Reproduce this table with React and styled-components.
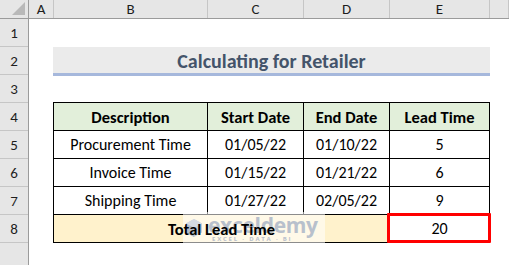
import React from "react";
import styled, { createGlobalStyle } from "styled-components";

const Global = createGlobalStyle`
  html, body { margin: 0; padding: 0; background: #fff; }
  body { font-family: Carlito, Lato, "Noto Sans", sans-serif; overflow: hidden; }
`;

const Page = styled.div`
  width: 509px;
  height: 265px;
  overflow: hidden;
  display: flex;
  flex-direction: column;
  background: #fff;
`;

const ColHeaderBar = styled.div`
  display: grid;
  grid-template-columns: 29px 25px 154px 96px 86px 100px 1fr;
  height: 23px;
  background: #e6e6e6;
  border-bottom: 1px solid #9b9b9b;
  box-sizing: border-box;
`;

const ColHead = styled.div`
  display: flex;
  align-items: center;
  justify-content: center;
  border-right: 1px solid ${(p) => (p.$corner ? "#9b9b9b" : "#c6c6c6")};
  font-size: 15px;
  color: #1e1e1e;
  position: relative;
`;

const CornerTriangle = styled.div`
  position: absolute;
  right: 3px;
  bottom: 3px;
  width: 0;
  height: 0;
  border-left: 13px solid transparent;
  border-bottom: 13px solid #b9b9b9;
`;

const Body = styled.div`
  display: flex;
  flex: 1;
`;

const RowHeaders = styled.div`
  width: 29px;
  display: flex;
  flex-direction: column;
  background: #e6e6e6;
  border-right: 1px solid #9b9b9b;
  box-sizing: border-box;
  flex-shrink: 0;
`;

const RowHead = styled.div`
  height: 28px;
  flex-shrink: 0;
  box-sizing: border-box;
  border-bottom: 1px solid #c6c6c6;
  display: flex;
  align-items: center;
  justify-content: center;
  font-size: 15px;
  color: #1e1e1e;
`;

const Canvas = styled.div`
  display: flex;
  flex-direction: column;
  padding-left: 24px;
`;

const Spacer = styled.div`
  height: ${(p) => p.$h}px;
`;

const Title = styled.div`
  width: 437px;
  height: 29px;
  box-sizing: border-box;
  background: #ebebeb;
  border-bottom: 3px solid #a6b8dc;
  display: flex;
  align-items: center;
  justify-content: center;
  font-weight: 700;
  font-size: 20px;
  color: #44546a;
  padding-top: 1px;
`;

const Table = styled.div`
  display: grid;
  grid-template-columns: 154px 96px 86px 100px;
  grid-auto-rows: 28px;
  border-left: 1px solid #000;
  border-top: 1px solid #000;
  width: 437px;
  box-sizing: border-box;
`;

const Cell = styled.div`
  position: relative;
  box-sizing: border-box;
  border-right: 1px solid #000;
  border-bottom: 1px solid #000;
  display: flex;
  align-items: center;
  justify-content: center;
  font-size: ${(p) => (p.$bold ? 16.5 : 16)}px;
  color: #000;
  font-weight: ${(p) => (p.$bold ? 700 : 400)};
  background: ${(p) => p.$bg || "#fff"};
  grid-column: ${(p) => (p.$span ? `span ${p.$span}` : "auto")};
`;

const Label = styled.span`
  position: relative;
  z-index: 2;
`;

const Highlight = styled.div`
  position: absolute;
  left: -3px;
  top: -2px;
  right: -2px;
  bottom: -1px;
  border: 3px solid #ff0000;
  border-radius: 1px;
  z-index: 3;
`;

const Watermark = styled.div`
  position: absolute;
  left: 129px;
  top: -3px;
  width: 142px;
  height: 31px;
  background: rgba(255, 255, 255, 0.55);
  z-index: 1;
  display: flex;
  align-items: center;
  gap: 5px;
  padding-left: 2px;
  box-sizing: border-box;
`;

const WmText = styled.div`
  display: flex;
  flex-direction: column;
  line-height: 1;
  margin-top: 2px;
`;

const WmName = styled.span`
  font-family: "Open Sans", sans-serif;
  font-weight: 700;
  font-size: 21px;
  color: #b8c0cc;
  letter-spacing: -0.3px;
`;

const WmSub = styled.span`
  font-family: "Open Sans", sans-serif;
  font-size: 6px;
  letter-spacing: 1.8px;
  color: #b8c0cc;
  margin-left: 4px;
`;

const rows = [
  ["Procurement Time", "01/05/22", "01/10/22", "5"],
  ["Invoice Time", "01/15/22", "01/21/22", "6"],
  ["Shipping Time", "01/27/22", "02/05/22", "9"],
];

export default function App() {
  return (
    <Page>
      <Global />
      <ColHeaderBar>
        <ColHead $corner>
          <CornerTriangle />
        </ColHead>
        {["A", "B", "C", "D", "E", ""].map((c, i) => (
          <ColHead key={i}>{c}</ColHead>
        ))}
      </ColHeaderBar>
      <Body>
        <RowHeaders>
          {[1, 2, 3, 4, 5, 6, 7, 8, ""].map((n, i) => (
            <RowHead key={i}>{n}</RowHead>
          ))}
        </RowHeaders>
        <Canvas>
          <Spacer $h={28} />
          <Title>Calculating for Retailer</Title>
          <Spacer $h={26} />
          <Table>
            {["Description", "Start Date", "End Date", "Lead Time"].map((h) => (
              <Cell key={h} $bold $bg="#e2efda">
                {h}
              </Cell>
            ))}
            {rows.map((r) =>
              r.map((v, i) => <Cell key={r[0] + i}>{v}</Cell>)
            )}
            <Cell $span={3} $bold $bg="#fff2cc">
              <Watermark>
                <svg width="18" height="20" viewBox="0 0 18 20">
                  <path d="M9 1 L17 5.5 L17 14.5 L9 19 L1 14.5 L1 5.5 Z" fill="#c4cbd6" />
                  <path d="M9 1 L17 5.5 L9 10 L1 5.5 Z" fill="#d6dbe3" />
                  <path d="M9 10 L9 19 L1 14.5 L1 5.5 Z" fill="#b5bdca" />
                </svg>
                <WmText>
                  <WmName>exceldemy</WmName>
                  <WmSub>EXCEL · DATA · BI</WmSub>
                </WmText>
              </Watermark>
              <Label>Total Lead Time</Label>
            </Cell>
            <Cell>
              20
              <Highlight />
            </Cell>
          </Table>
        </Canvas>
      </Body>
    </Page>
  );
}
